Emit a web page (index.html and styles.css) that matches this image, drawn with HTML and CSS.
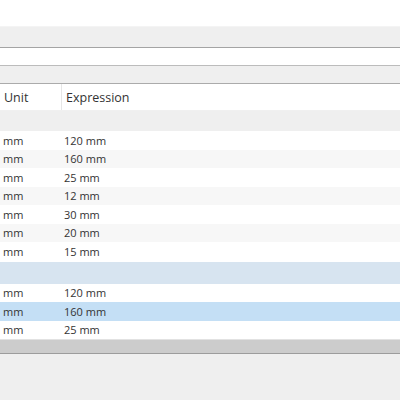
FILE: index.html
```html
<!DOCTYPE html>
<html lang="en">

<head>
    <meta charset="UTF-8">
    <meta name="viewport" content="width=device-width, initial-scale=1.0">
    <title>Parameters</title>
    <link rel="stylesheet" href="styles.css">
</head>

<body>
    <div class="window">
        <div class="topSpace"></div>
        <div class="toolbar"></div>
        <div class="filterBar"></div>
        <div class="tabBar"></div>
        <div class="table">
            <div class="tableHead">
                <div class="colUnit">Unit</div>
                <div class="colExpr">Expression</div>
            </div>
            <div class="group"></div>
            <div class="row"><div class="colUnit">mm</div><div class="colExpr">120 mm</div></div>
            <div class="row alt"><div class="colUnit">mm</div><div class="colExpr">160 mm</div></div>
            <div class="row"><div class="colUnit">mm</div><div class="colExpr">25 mm</div></div>
            <div class="row alt"><div class="colUnit">mm</div><div class="colExpr">12 mm</div></div>
            <div class="row"><div class="colUnit">mm</div><div class="colExpr">30 mm</div></div>
            <div class="row alt"><div class="colUnit">mm</div><div class="colExpr">20 mm</div></div>
            <div class="row"><div class="colUnit">mm</div><div class="colExpr">15 mm</div></div>
            <div class="group current"></div>
            <div class="row"><div class="colUnit">mm</div><div class="colExpr">120 mm</div></div>
            <div class="row selected"><div class="colUnit">mm</div><div class="colExpr">160 mm</div></div>
            <div class="row"><div class="colUnit">mm</div><div class="colExpr">25 mm</div></div>
            <div class="scrollBar"></div>
        </div>
        <div class="bottomPanel"></div>
    </div>
</body>

</html>
```
FILE: styles.css
```css
body {
    margin: 0;
    font-family: "Open Sans", "Noto Sans", sans-serif;
    color: #333;
    background-color: #efefef;
}

.window {
    display: flex;
    flex-direction: column;
    width: 400px;
    height: 400px;
    overflow: hidden;
}

.topSpace {
    height: 26px;
    background-color: #fff;
}

.toolbar {
    height: 20px;
    background-color: #efefef;
    border-top: 1px solid #f4f4f4;
    border-bottom: 1px solid #a4a4a4;
}

.filterBar {
    height: 17px;
    background-color: #fff;
    border-bottom: 1px solid #bcbcbc;
}

.tabBar {
    height: 17px;
    background-color: #efefef;
    border-bottom: 1px solid #ababab;
}

.table {
    display: flex;
    flex-direction: column;
    background-color: #fff;
}

.tableHead {
    display: flex;
    height: 26px;
    align-items: stretch;
    font-size: 12.5px;
    border-bottom: 1px solid #f0f0f0;
}

.tableHead .colUnit {
    width: 57px;
    padding-left: 4px;
    border-right: 1px solid #e6e6e6;
    display: flex;
    align-items: center;
}

.tableHead .colExpr {
    padding-left: 4px;
    display: flex;
    align-items: center;
}

.group {
    height: 20px;
    background-color: #efefef;
}

.group.current {
    height: 22px;
    margin-top: 1px;
    background-color: #d7e4f0;
}

.row {
    display: flex;
    align-items: center;
    height: 18.5px;
    font-size: 11px;
    background-color: #fff;
}

.row.alt {
    background-color: #f7f7f7;
}

.row.selected {
    background-color: #c4dff5;
}

.row .colUnit {
    width: 61px;
    padding-left: 3px;
    box-sizing: border-box;
}

.row .colExpr {
    padding-left: 3px;
}

.scrollBar {
    height: 13px;
    background-color: #cccccc;
    border-top: 1px solid #e2e2e2;
    border-bottom: 1px solid #9c9c9c;
}

.bottomPanel {
    flex: 1;
    background-color: #efefef;
}
```
